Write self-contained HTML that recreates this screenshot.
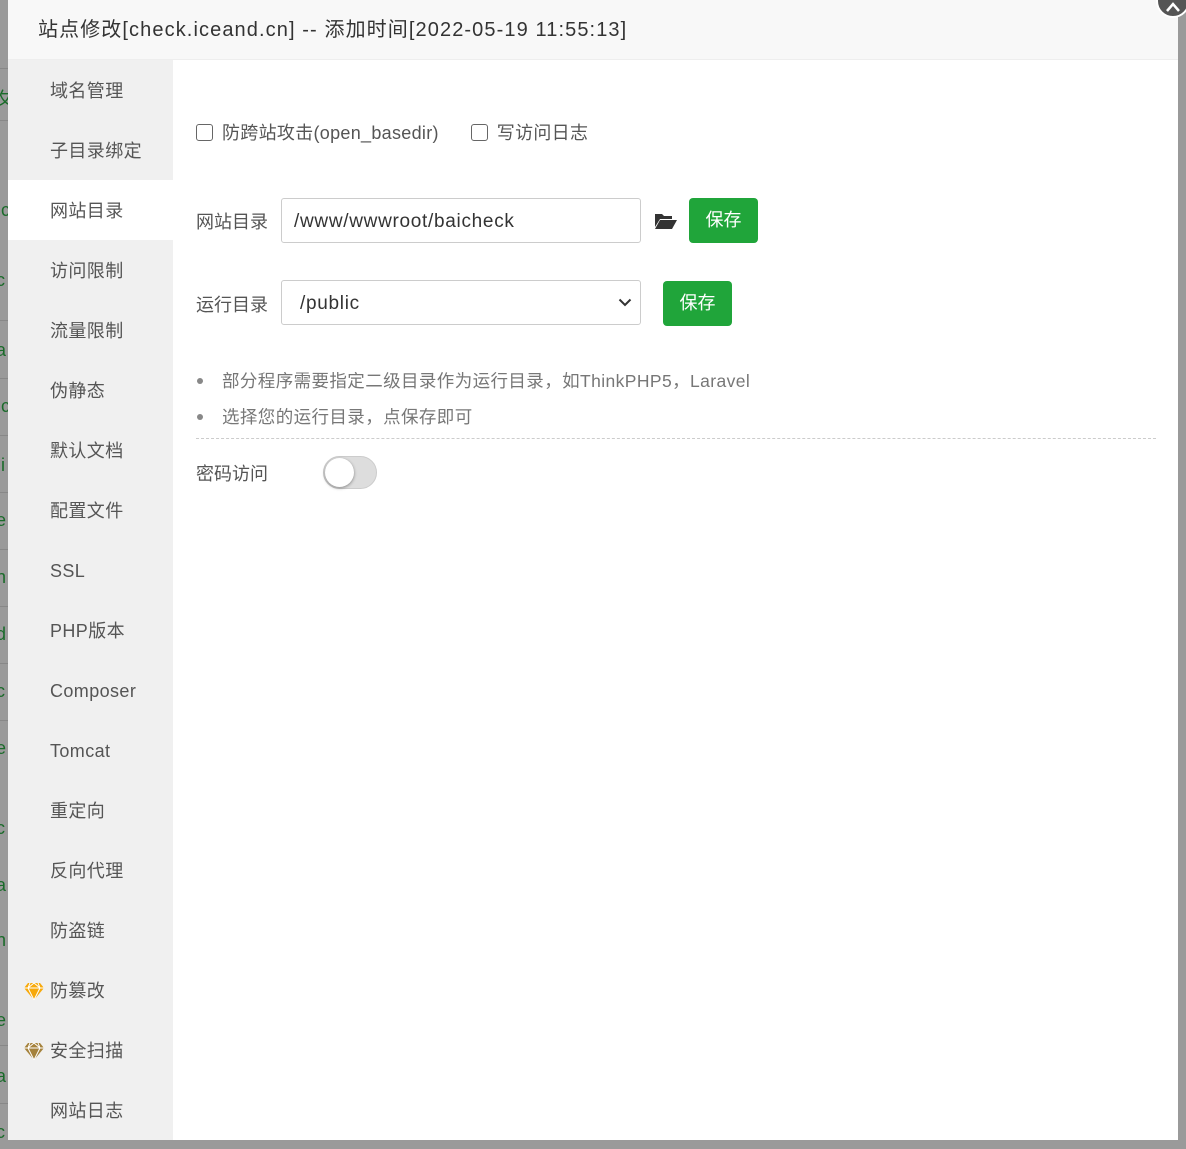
<!DOCTYPE html>
<html><head><meta charset="utf-8"><style>
*{margin:0;padding:0;box-sizing:border-box}
body{width:1186px;height:1149px;background:#9a9a9a;position:relative;overflow:hidden;font-family:"Liberation Sans","Noto Sans CJK SC",sans-serif}
.frag{position:absolute;left:-4px;font-size:18px;color:#1a6b2a}
.hl{position:absolute;left:0;width:8px;height:1px;background:#888}
.modal{position:absolute;left:8px;top:0;width:1170px;height:1140px;background:#fff}
.hd{height:60px;background:#f8f8f8;border-bottom:1px solid #eee;font-size:20px;color:#333;line-height:60px;padding-left:30px;letter-spacing:1.1px}
.side{position:absolute;left:0;top:60px;width:165px;height:1080px;background:#f0f0f0}
.side div{height:60px;line-height:62px;padding-left:42px;font-size:18px;color:#555;position:relative;letter-spacing:0.4px}
.side div.act{background:#fff}
.gem{position:absolute;left:16px;top:22px}
.ct{position:absolute;left:188px;top:60px;right:0;bottom:0;font-size:18px;color:#555}
.ab{position:absolute}
.cb{display:inline-block;width:17px;height:17px;border:1.5px solid #666;border-radius:3px;vertical-align:-2px;margin-right:9px}
.inp{border:1px solid #ccc;border-radius:3px;height:45px;line-height:45px;padding-left:12px;font-size:19px;color:#333;letter-spacing:0.7px}
.btn{background:#20a53a;color:#fff;border-radius:4px;height:45px;line-height:45px;text-align:center;width:69px;font-size:18px}
.close{position:absolute;left:1156px;top:-16px;width:34px;height:34px;border-radius:50%;background:#555;border:2px solid #fff}
</style></head><body>
<div class="hl" style="top:68px"></div><div class="hl" style="top:120px"></div><div class="hl" style="top:320px"></div><div class="hl" style="top:378px"></div><div class="hl" style="top:435px"></div><div class="hl" style="top:492px"></div><div class="hl" style="top:549px"></div><div class="hl" style="top:606px"></div><div class="hl" style="top:663px"></div><div class="hl" style="top:720px"></div><div class="hl" style="top:1045px"></div><div class="hl" style="top:1103px"></div>
<div class="frag" style="top:85px">攵</div><div class="frag" style="top:200px">.c</div><div class="frag" style="top:270px">c</div><div class="frag" style="top:340px">a</div><div class="frag" style="top:396px">.c</div><div class="frag" style="top:455px">.i</div><div class="frag" style="top:510px">e</div><div class="frag" style="top:567px">n</div><div class="frag" style="top:624px">d</div><div class="frag" style="top:681px">c</div><div class="frag" style="top:738px">e</div><div class="frag" style="top:818px">c</div><div class="frag" style="top:875px">a</div><div class="frag" style="top:930px">n</div><div class="frag" style="top:1010px">e</div><div class="frag" style="top:1066px">a</div><div class="frag" style="top:1122px">c</div>
<div class="modal">
<div class="hd">站点修改[check.iceand.cn] -- 添加时间[2022-05-19 11:55:13]</div>
<div class="side">
<div>域名管理</div><div>子目录绑定</div><div class="act">网站目录</div><div>访问限制</div><div>流量限制</div><div>伪静态</div><div>默认文档</div><div>配置文件</div><div>SSL</div><div>PHP版本</div><div>Composer</div><div>Tomcat</div><div>重定向</div><div>反向代理</div><div>防盗链</div>
<div><svg class="gem" width="20" height="18" viewBox="0 0 20 18"><path d="M4 1h12l4 5-10 12L0 6z" fill="#f7a90b"/><path d="M0 6h20M6 1l-2 5 6 12 6-12-2-5M4 6l6-5 6 5" stroke="#fff" stroke-width="1" fill="none"/></svg>防篡改</div>
<div><svg class="gem" width="20" height="18" viewBox="0 0 20 18"><path d="M4 1h12l4 5-10 12L0 6z" fill="#a5823c"/><path d="M0 6h20M6 1l-2 5 6 12 6-12-2-5M4 6l6-5 6 5" stroke="#fff" stroke-width="1" fill="none"/></svg>安全扫描</div>
<div>网站日志</div>
</div>
<div class="ct">
<div class="ab" style="left:0;top:61px;line-height:24px;letter-spacing:0.3px"><span class="cb"></span>防跨站攻击(open_basedir)<span style="display:inline-block;width:32px"></span><span class="cb"></span>写访问日志</div>
<div class="ab" style="left:0;top:148px">网站目录</div>
<div class="ab inp" style="left:85px;top:138px;width:360px">/www/wwwroot/baicheck</div>
<svg class="ab" style="left:459px;top:152px" width="22" height="17" viewBox="0 0 22 17"><path d="M0 2h7l2 2h8v3H5L0 15z" fill="#333"/><path d="M5 8h17l-5 9H0z" fill="#333"/></svg>
<div class="ab btn" style="left:493px;top:138px">保存</div>
<div class="ab" style="left:0;top:231px">运行目录</div>
<div class="ab inp" style="left:85px;top:220px;width:360px;padding-left:18px">/public
<svg style="position:absolute;right:8px;top:17px" width="14" height="9" viewBox="0 0 14 9"><path d="M1.5 1.5l5.5 5.5 5.5-5.5" stroke="#333" stroke-width="2" fill="none"/></svg></div>
<div class="ab btn" style="left:467px;top:221px">保存</div>
<div class="ab" style="left:0;top:303px;color:#777;font-size:17.5px;line-height:36px;letter-spacing:0.4px">
<div><span style="display:inline-block;width:6px;height:6px;border-radius:50%;background:#888;vertical-align:3px;margin:0 19px 0 1px"></span>部分程序需要指定二级目录作为运行目录，如ThinkPHP5，Laravel</div>
<div><span style="display:inline-block;width:6px;height:6px;border-radius:50%;background:#888;vertical-align:3px;margin:0 19px 0 1px"></span>选择您的运行目录，点保存即可</div>
</div>
<div class="ab" style="left:0;top:378px;width:960px;border-top:1px dashed #ccc"></div>
<div class="ab" style="left:0;top:400px">密码访问</div>
<div class="ab" style="left:127px;top:396px;width:54px;height:33px;border-radius:17px;background:#ddd;border:1px solid #ccc"><div style="position:absolute;left:1px;top:1px;width:29px;height:29px;border-radius:50%;background:#fff;box-shadow:0 1px 3px rgba(0,0,0,.4)"></div></div>
</div>
</div>
<div class="close"><svg style="position:absolute;left:8px;top:14px" width="14" height="12" viewBox="0 0 14 12"><path d="M1 11L7 4l6 7" stroke="#fff" stroke-width="2.5" fill="none"/></svg></div>
</body></html>
